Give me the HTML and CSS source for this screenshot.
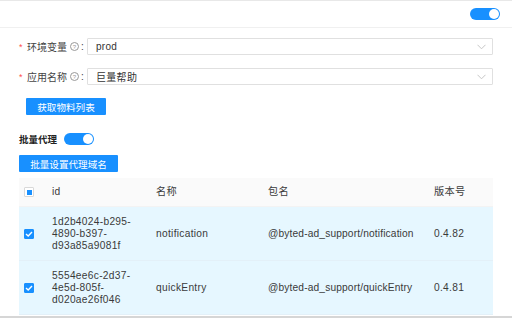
FILE: index.html
```html
<!DOCTYPE html>
<html lang="zh-CN">
<head>
    <meta charset="UTF-8">
    <meta name="viewport" content="width=device-width, initial-scale=1.0">
    <title>代理设置</title>
    <link rel="stylesheet" href="styles.css">
</head>
<body>
    <div class="topbar">
        <span class="switch"><span class="knob"></span></span>
    </div>

    <div class="page">
        <div class="form-item">
            <label class="form-label"><span class="req">*</span>环境变量<span class="help">?</span>:</label>
            <div class="select">
                <span>prod</span>
                <svg class="arrow" width="9" height="6" viewBox="0 0 9 6"><path d="M0.5 0.8 L4.5 4.8 L8.5 0.8" fill="none" stroke="#bfbfbf" stroke-width="0.9"/></svg>
            </div>
        </div>

        <div class="form-item">
            <label class="form-label"><span class="req">*</span>应用名称<span class="help">?</span>:</label>
            <div class="select">
                <span>巨量帮助</span>
                <svg class="arrow" width="9" height="6" viewBox="0 0 9 6"><path d="M0.5 0.8 L4.5 4.8 L8.5 0.8" fill="none" stroke="#bfbfbf" stroke-width="0.9"/></svg>
            </div>
        </div>

        <button class="btn btn-fetch">获取物料列表</button>

        <div class="batch-row">
            <span class="batch-label">批量代理</span>
            <span class="switch"><span class="knob"></span></span>
        </div>

        <button class="btn btn-batch">批量设置代理域名</button>

        <table class="list">
            <colgroup>
                <col class="c-check">
                <col class="c-id">
                <col class="c-name">
                <col class="c-pkg">
                <col class="c-ver">
            </colgroup>
            <thead>
                <tr>
                    <th class="cell-check"><span class="checkbox half"></span></th>
                    <th>id</th>
                    <th>名称</th>
                    <th>包名</th>
                    <th>版本号</th>
                </tr>
            </thead>
            <tbody>
                <tr class="selected">
                    <td class="cell-check"><span class="checkbox on"><svg width="8" height="6" viewBox="0 0 8 6"><path d="M1 3 L3.2 5 L7 1" fill="none" stroke="#fff" stroke-width="1.4"/></svg></span></td>
                    <td>1d2b4024-b295-4890-b397-d93a85a9081f</td>
                    <td>notification</td>
                    <td class="nowrap">@byted-ad_support/notification</td>
                    <td>0.4.82</td>
                </tr>
                <tr class="selected">
                    <td class="cell-check"><span class="checkbox on"><svg width="8" height="6" viewBox="0 0 8 6"><path d="M1 3 L3.2 5 L7 1" fill="none" stroke="#fff" stroke-width="1.4"/></svg></span></td>
                    <td>5554ee6c-2d37-4e5d-805f-d020ae26f046</td>
                    <td>quickEntry</td>
                    <td class="nowrap">@byted-ad_support/quickEntry</td>
                    <td>0.4.81</td>
                </tr>
            </tbody>
        </table>
    </div>

    <div class="bottom-line"></div>
</body>
</html>
```

FILE: styles.css
```css
body {
    margin: 0;
    font-family: "Liberation Sans", "Noto Sans CJK SC", sans-serif;
    font-size: 10px;
    color: #333;
    background: #fff;
    overflow: hidden;
}

.topbar {
    height: 26px;
    border-top: 1px solid #e8e8e8;
    border-bottom: 1px solid #f0f0f0;
    display: flex;
    align-items: center;
    justify-content: flex-end;
    padding-right: 12px;
}

.switch {
    display: inline-block;
    position: relative;
    width: 30px;
    height: 12px;
    border-radius: 6px;
    background-color: #1890ff;
}

.switch .knob {
    position: absolute;
    top: 1px;
    right: 1px;
    width: 10px;
    height: 10px;
    border-radius: 50%;
    background-color: #fff;
}

.page {
    padding: 10px 19px 0 19px;
}

.form-item {
    display: flex;
    align-items: center;
    height: 17px;
    margin-bottom: 13px;
}

.form-label {
    width: 68px;
    flex-shrink: 0;
    display: flex;
    align-items: center;
    color: #444;
    white-space: nowrap;
}

.req {
    color: #ff4d4f;
    width: 8px;
    font-size: 9px;
}

.help {
    display: inline-flex;
    align-items: center;
    justify-content: center;
    width: 7px;
    height: 7px;
    margin: 0 2px 0 3px;
    border: 1px solid #999;
    border-radius: 50%;
    font-size: 6px;
    line-height: 1;
    color: #999;
}

.select {
    flex: 1;
    height: 15px;
    border: 1px solid #e0e0e0;
    border-radius: 1px;
    display: flex;
    align-items: center;
    justify-content: space-between;
    padding: 0 6px 0 8px;
    font-size: 10px;
    letter-spacing: 0.3px;
    color: #333;
}

.btn {
    display: block;
    height: 17px;
    border: none;
    border-radius: 1px;
    background-color: #1890ff;
    color: #fff;
    font-family: "Liberation Sans", "Noto Sans CJK SC", sans-serif;
    font-size: 9.6px;
    padding: 0;
    cursor: pointer;
}

.btn-fetch {
    width: 80px;
    margin-left: 7px;
}

.batch-row {
    display: flex;
    align-items: center;
    gap: 7px;
    margin-top: 18px;
    height: 11px;
}

.batch-label {
    font-weight: bold;
    font-size: 9.5px;
    color: #222;
}

.btn-batch {
    width: 99px;
    margin-top: 11px;
}

.list {
    margin-top: 6px;
    width: 474px;
    border-collapse: collapse;
    table-layout: fixed;
}

.c-check { width: 25px; }
.c-id { width: 104px; }
.c-name { width: 112px; }
.c-pkg { width: 166px; }
.c-ver { width: 67px; }

.list th,
.list td {
    text-align: left;
    padding: 8px 8px;
    line-height: 12px;
    font-size: 10.2px;
    letter-spacing: 0.3px;
    font-weight: normal;
    color: #3a3a3a;
    border-bottom: 1px solid #e3f0f8;
    vertical-align: middle;
    word-wrap: break-word;
}

.list td {
    padding-top: 9px;
}

.list td.nowrap {
    white-space: nowrap;
    letter-spacing: 0.15px;
}

.list th {
    background-color: #fafafa;
    height: 12px;
    border-bottom: 1px solid #f3f3f3;
}

.list tr.selected td {
    background-color: #e6f7ff;
}

.list .cell-check {
    padding: 0 0 0 5px;
}

.checkbox {
    display: flex;
    align-items: center;
    justify-content: center;
    width: 8px;
    height: 8px;
    border: 1px solid #d9d9d9;
    border-radius: 1px;
    background: #fff;
}

.checkbox.half::after {
    content: "";
    width: 5px;
    height: 5px;
    background-color: #1890ff;
}

.checkbox.on {
    background-color: #1890ff;
    border-color: #1890ff;
}

.bottom-line {
    position: absolute;
    left: 0;
    right: 0;
    top: 316px;
    height: 2px;
    background-color: #d6d6d6;
}
```
